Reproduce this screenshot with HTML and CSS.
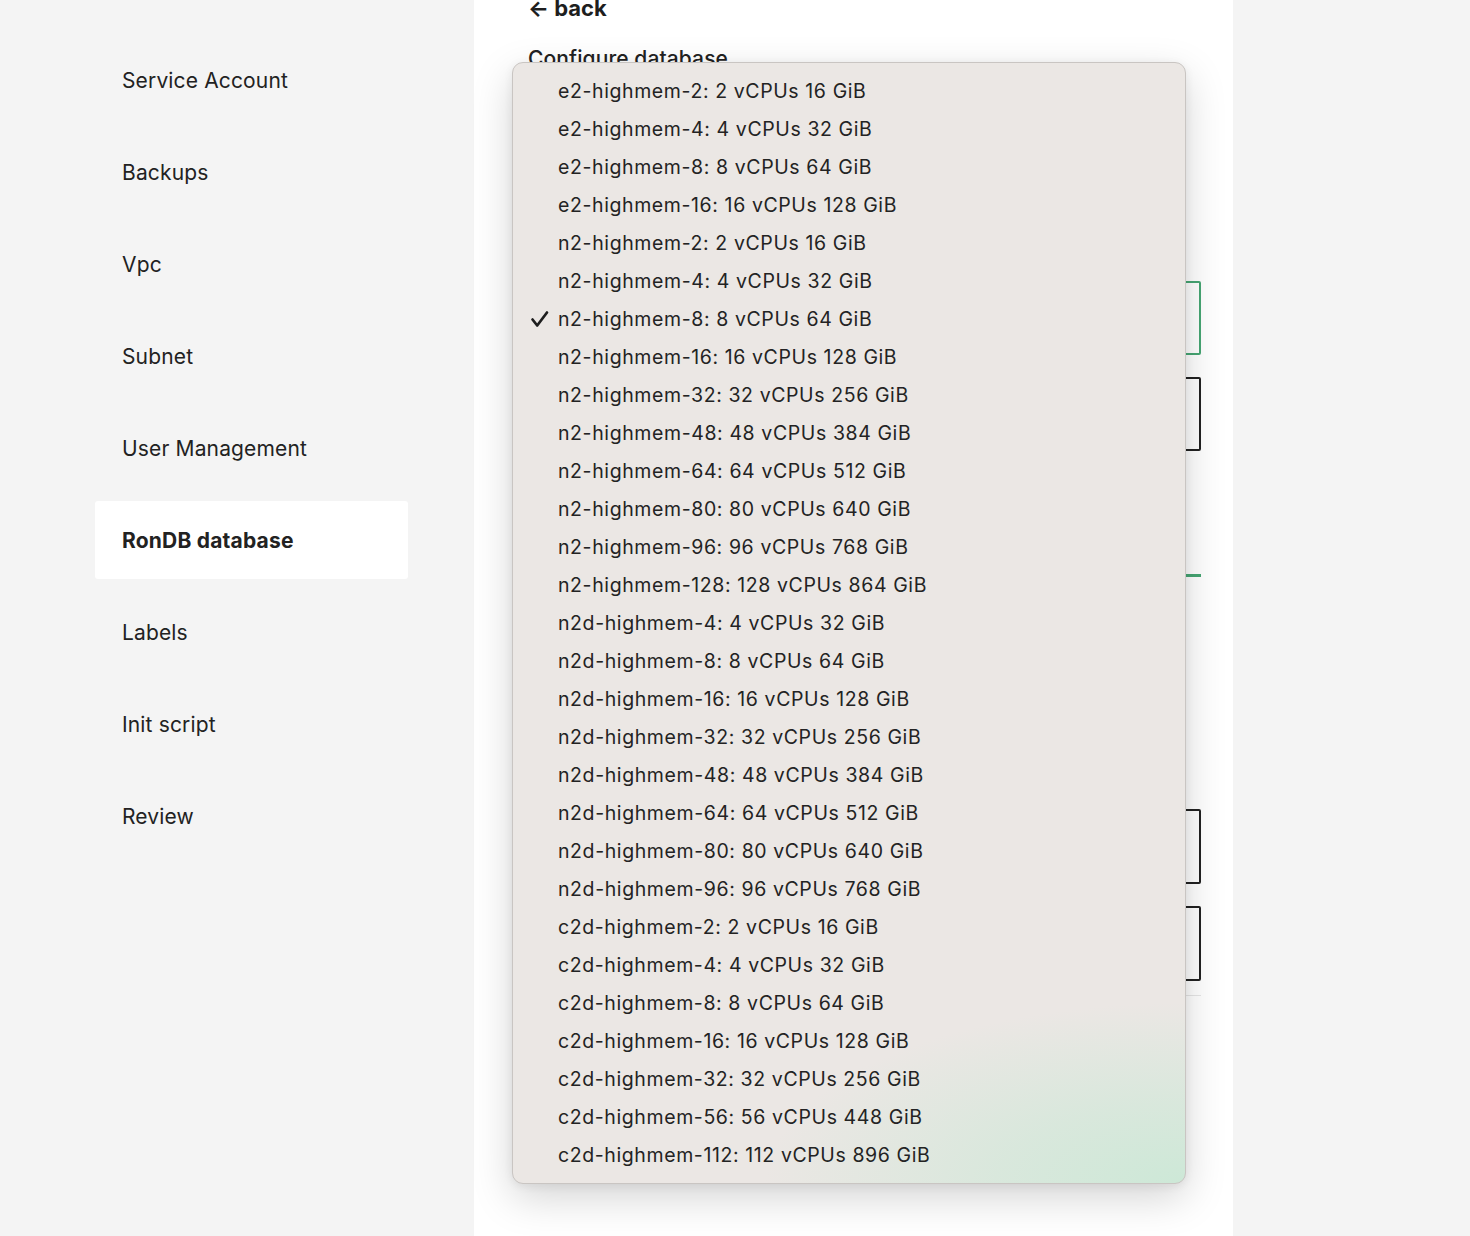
FILE: index.html
```html
<!DOCTYPE html>
<html lang="en">
<head>
<meta charset="utf-8">
<title>Configure database</title>
<link rel="stylesheet" href="styles.css">
</head>
<body>
<div class="page">
  <nav class="sidebar">
    <div class="nav-item">Service Account</div>
    <div class="nav-item">Backups</div>
    <div class="nav-item">Vpc</div>
    <div class="nav-item">Subnet</div>
    <div class="nav-item">User Management</div>
    <div class="nav-item active">RonDB database</div>
    <div class="nav-item">Labels</div>
    <div class="nav-item">Init script</div>
    <div class="nav-item">Review</div>
  </nav>
  <main class="main">
    <a class="back">← back</a>
    <h2 class="title">Configure database</h2>
    <div class="field field-green f1"></div>
    <div class="field field-dark f2"></div>
    <div class="tabline"></div>
    <div class="field field-dark f3"></div>
    <div class="field field-dark f4"></div>
    <div class="divider"></div>

    <ul class="menu">
      <li class="opt">e2-highmem-2: 2 vCPUs 16 GiB</li>
      <li class="opt">e2-highmem-4: 4 vCPUs 32 GiB</li>
      <li class="opt">e2-highmem-8: 8 vCPUs 64 GiB</li>
      <li class="opt">e2-highmem-16: 16 vCPUs 128 GiB</li>
      <li class="opt">n2-highmem-2: 2 vCPUs 16 GiB</li>
      <li class="opt">n2-highmem-4: 4 vCPUs 32 GiB</li>
      <li class="opt selected"><svg class="check" viewBox="0 0 20 20" width="20" height="20"><path d="M2.5 10.5 L7.2 16.5 L17 3.5" fill="none" stroke="#1e1e1e" stroke-width="2.7" stroke-linecap="round" stroke-linejoin="round"/></svg>n2-highmem-8: 8 vCPUs 64 GiB</li>
      <li class="opt">n2-highmem-16: 16 vCPUs 128 GiB</li>
      <li class="opt">n2-highmem-32: 32 vCPUs 256 GiB</li>
      <li class="opt">n2-highmem-48: 48 vCPUs 384 GiB</li>
      <li class="opt">n2-highmem-64: 64 vCPUs 512 GiB</li>
      <li class="opt">n2-highmem-80: 80 vCPUs 640 GiB</li>
      <li class="opt">n2-highmem-96: 96 vCPUs 768 GiB</li>
      <li class="opt">n2-highmem-128: 128 vCPUs 864 GiB</li>
      <li class="opt">n2d-highmem-4: 4 vCPUs 32 GiB</li>
      <li class="opt">n2d-highmem-8: 8 vCPUs 64 GiB</li>
      <li class="opt">n2d-highmem-16: 16 vCPUs 128 GiB</li>
      <li class="opt">n2d-highmem-32: 32 vCPUs 256 GiB</li>
      <li class="opt">n2d-highmem-48: 48 vCPUs 384 GiB</li>
      <li class="opt">n2d-highmem-64: 64 vCPUs 512 GiB</li>
      <li class="opt">n2d-highmem-80: 80 vCPUs 640 GiB</li>
      <li class="opt">n2d-highmem-96: 96 vCPUs 768 GiB</li>
      <li class="opt">c2d-highmem-2: 2 vCPUs 16 GiB</li>
      <li class="opt">c2d-highmem-4: 4 vCPUs 32 GiB</li>
      <li class="opt">c2d-highmem-8: 8 vCPUs 64 GiB</li>
      <li class="opt">c2d-highmem-16: 16 vCPUs 128 GiB</li>
      <li class="opt">c2d-highmem-32: 32 vCPUs 256 GiB</li>
      <li class="opt">c2d-highmem-56: 56 vCPUs 448 GiB</li>
      <li class="opt">c2d-highmem-112: 112 vCPUs 896 GiB</li>
    </ul>
  </main>
  <div class="rest"></div>
</div>
</body>
</html>
```

FILE: styles.css
```css
* { box-sizing: border-box; }
html, body { margin: 0; padding: 0; }
body {
  background: #f4f4f4;
  font-family: Inter, "Noto Sans", sans-serif;
  color: #222;
  height: 1236px;
  overflow: hidden;
}
.page {
  display: flex;
  height: 1236px;
}
.sidebar {
  width: 474px;
  flex: none;
  background: #f4f4f4;
  padding: 41px 0 0 95px;
  display: flex;
  flex-direction: column;
  gap: 14px;
}
.nav-item {
  width: 313px;
  height: 78px;
  display: flex;
  align-items: center;
  padding-left: 27px;
  font-size: 21px;
  letter-spacing: 0.15px;
  color: #222;
  border-radius: 3px;
}
.nav-item.active {
  background: #fff;
  font-weight: 700;
  letter-spacing: 0.2px;
}
.main {
  width: 759px;
  flex: none;
  background: #fff;
  position: relative;
  padding-left: 54px;
  display: flex;
  flex-direction: column;
}
.back {
  display: block;
  font-size: 22px;
  font-weight: 700;
  line-height: 26px;
  margin-top: -5px;
  color: #1e1e1e;
}
.title {
  margin: 24px 0 0;
  font-size: 21px;
  font-weight: 500;
  line-height: 28px;
  letter-spacing: 0.1px;
}
.field {
  width: 673px;
  height: 74px;
  border: 2px solid #222;
  border-radius: 2px;
}
.field-green { border-color: #46a673; }
.f1 { margin-top: 208px; }
.f2 { margin-top: 22px; }
.tabline {
  width: 673px;
  height: 3px;
  background: #46a673;
  margin-top: 123px;
}
.f3 { margin-top: 232px; height: 75px; }
.f4 { margin-top: 22px; height: 75px; }
.divider {
  width: 673px;
  height: 1px;
  background: #e6e6e6;
  margin-top: 14px;
}
.menu {
  position: absolute;
  left: 38px;
  top: 62px;
  width: 674px;
  height: 1122px;
  margin: 0;
  padding: 9px 0 11px;
  list-style: none;
  border-radius: 11px;
  border: 1px solid #c9c5c2;
  background:
    radial-gradient(ellipse 420px 180px at 100% 100%, rgba(205,232,215,1) 0%, rgba(205,232,215,0.6) 45%, rgba(205,232,215,0) 100%),
    #ebe7e4;
  box-shadow: 0 14px 40px rgba(0,0,0,0.17), 0 2px 10px rgba(0,0,0,0.07);
}
.opt {
  position: relative;
  height: 38px;
  display: flex;
  align-items: center;
  padding-left: 45px;
  font-size: 19.5px;
  letter-spacing: 0.6px;
  color: #232323;
}
.check {
  position: absolute;
  left: 17px;
  top: 9px;
}
.rest {
  flex: 1;
  background: #f4f4f4;
}
```
